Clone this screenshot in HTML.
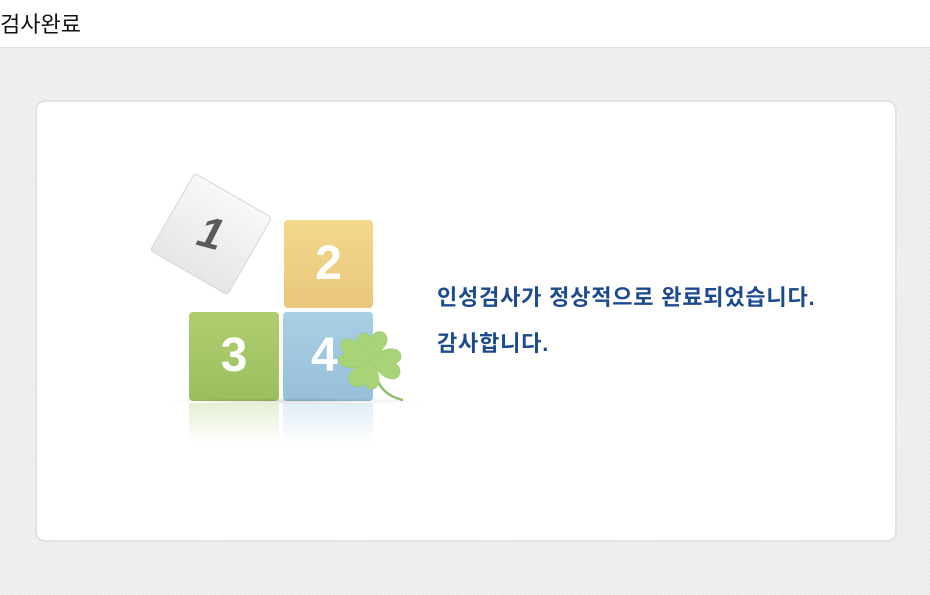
<!DOCTYPE html>
<html><head><meta charset="utf-8"><style>
body{margin:0;width:930px;height:595px;overflow:hidden;font-family:"Liberation Sans","Noto Sans CJK KR",sans-serif;
background:repeating-linear-gradient(135deg,#f1f1f1 0 2px,#e9e9e9 2px 3px);position:relative}
.hd{position:absolute;left:0;top:0;width:930px;height:47px;background:#fff;border-bottom:1px solid #e0e0e0}
.hd span{position:absolute;left:0px;top:7px;font-size:22px;color:#111}
.card{position:absolute;left:35px;top:100px;width:858px;height:438px;background:#fff;border:2px solid #e2e2e2;border-radius:10px}
.t{position:absolute;border-radius:4px;color:#fff;font-weight:bold;font-size:48px;text-align:center;line-height:88px}
.msg{position:absolute;left:437px;color:#1c4a8e;font-size:22px;font-weight:bold;letter-spacing:0.8px}
</style></head><body>
<div class="hd"><span>검사완료</span></div>
<div class="card"></div>
<div class="t" style="left:166px;top:189px;width:88px;height:88px;background:linear-gradient(#f8f8f8,#e6e6e6);border:1px solid #d4d4d4;transform:rotate(30deg);color:#5e5a58;line-height:88px;font-size:44px"><span style="display:inline-block;transform:rotate(-15deg) skewX(-12deg)">1</span></div>
<div class="t" style="left:284px;top:220px;width:89px;height:88px;background:linear-gradient(#f3d88c,#e9c77c)">2</div>
<div class="t" style="left:189px;top:312px;width:90px;height:89px;background:linear-gradient(#b0cd70,#9bbf5d)">3</div>
<div class="t" style="left:283px;top:312px;width:90px;height:89px;background:linear-gradient(#a9cfe2,#96bfd9);text-align:left;text-indent:28px">4</div>
<div style="position:absolute;left:189px;top:403px;width:90px;height:40px;background:linear-gradient(rgba(190,215,150,.4),rgba(255,255,255,0))"></div>
<div style="position:absolute;left:283px;top:403px;width:90px;height:40px;background:linear-gradient(rgba(180,210,230,.4),rgba(255,255,255,0))"></div>
<div style="position:absolute;left:160px;top:398px;width:265px;height:6px;border-radius:50%;background:radial-gradient(rgba(0,0,0,.15),rgba(0,0,0,0) 70%)"></div>
<svg style="position:absolute;left:335px;top:325px" width="75" height="80" viewBox="0 0 75 80">
<path d="M40 48 Q45 70 68 75" stroke="#8cc06a" stroke-width="2.5" fill="none"/>
<g fill="#a8d477" stroke="#96c566" stroke-width="0.5">
<path d="M36 36 C20 28 18 8 30 8 C34 8 36 12 36 14 C38 4 52 4 52 14 C52 24 40 30 36 36Z"/>
<path d="M36 36 C44 22 64 20 66 30 C67 36 62 38 60 38 C68 42 66 54 58 54 C48 54 40 44 36 36Z"/>
<path d="M36 36 C44 44 48 62 38 64 C32 65 30 60 30 58 C24 66 10 60 14 50 C18 42 28 38 36 36Z"/>
<path d="M36 36 C26 44 6 46 4 36 C3 30 8 28 10 28 C2 22 6 12 14 14 C24 16 32 26 36 36Z"/>
</g></svg>
<div class="msg" style="top:280px">인성검사가 정상적으로 완료되었습니다.</div>
<div class="msg" style="top:326px">감사합니다.</div>
</body></html>
